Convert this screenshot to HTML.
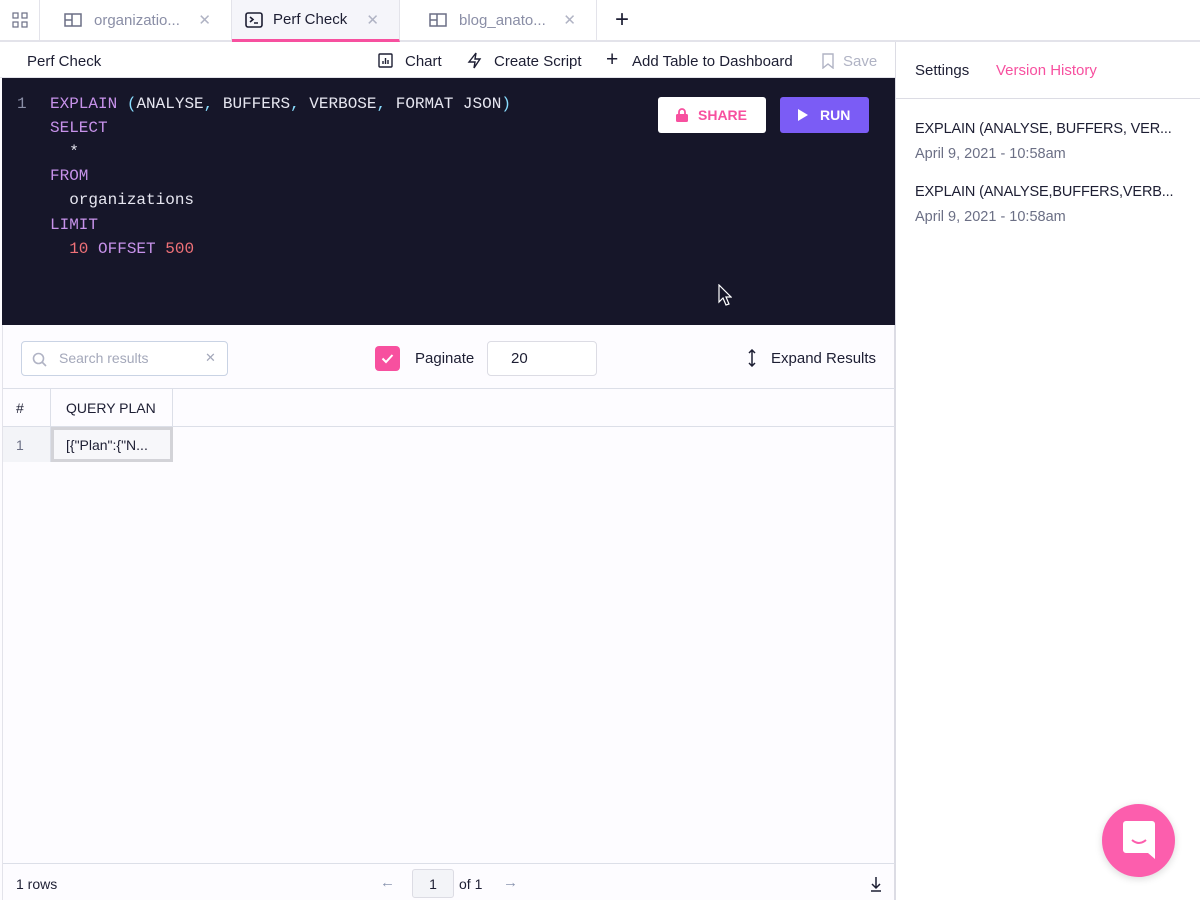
<!DOCTYPE html>
<html><head><meta charset="utf-8"><style>
*{box-sizing:border-box;margin:0;padding:0}
body{width:1200px;height:900px;overflow:hidden;background:#fdfcff;font-family:"Liberation Sans",sans-serif;color:#1d1e33;position:relative;font-size:15px}
.abs{position:absolute}
.tabs{left:0;top:0;width:1200px;height:42px;border-bottom:2px solid #e3e3ea;background:#fff}
.tab{position:absolute;top:0;height:40px;border-right:1px solid #e3e3ea;display:flex;align-items:center;font-size:15px;color:#8a8ea6}
.tab .x{position:absolute;right:20px;color:#b0b3c4;font-size:15px}
.tb{left:0;top:42px;width:895px;height:36px;background:#fff;border-bottom:1px solid #e3e3ea;font-size:15px}
.ed{left:2px;top:78px;width:893px;height:247px;background:#161629;font-family:"Liberation Mono",monospace;font-size:16px;color:#e6e6f0}
.ln{position:absolute;left:15px;color:#8a8ea6}
.cl{position:absolute;left:48px;white-space:pre}
.k{color:#c792ea}.p{color:#89ddff}.n{color:#f07178}
.rp{left:895px;top:42px;width:305px;height:858px;border-left:1px solid #dcdce4;background:#fff}
</style></head><body>
<div class="abs tabs">
 <div class="tab" style="left:0;width:40px;justify-content:center">
  <svg width="16" height="16" viewBox="0 0 16 16" fill="none" stroke="#6b6f85" stroke-width="1.2"><rect x="1" y="1" width="5" height="5"/><rect x="10" y="1" width="5" height="5"/><rect x="1" y="10" width="5" height="5"/><rect x="10" y="10" width="5" height="5"/></svg></div>
 <div class="tab" style="left:40px;width:192px;padding-left:24px">
  <svg width="18" height="14" viewBox="0 0 18 14" fill="none" stroke="#6b6f85" stroke-width="1.5"><rect x="1" y="1" width="16" height="12"/><line x1="8" y1="1" x2="8" y2="13"/><line x1="1" y1="7" x2="8" y2="7"/></svg>
  <span style="margin-left:12px">organizatio...</span><span class="x">✕</span></div>
 <div class="tab" style="left:232px;width:168px;padding-left:13px;background:#f5f5fa;color:#1d1e33;border-bottom:3px solid #f7509f;height:42px">
  <svg width="18" height="16" viewBox="0 0 18 16" fill="none" stroke="#1d1e33" stroke-width="1.6"><rect x="1" y="1" width="16" height="14" rx="2"/><path d="M5 5l3 2.5L5 10M9 11h4"/></svg>
  <span style="margin-left:10px">Perf Check</span><span class="x" style="color:#b0b3c4">✕</span></div>
 <div class="tab" style="left:400px;width:197px;padding-left:29px">
  <svg width="18" height="14" viewBox="0 0 18 14" fill="none" stroke="#6b6f85" stroke-width="1.5"><rect x="1" y="1" width="16" height="12"/><line x1="8" y1="1" x2="8" y2="13"/><line x1="1" y1="7" x2="8" y2="7"/></svg>
  <span style="margin-left:12px">blog_anato...</span><span class="x">✕</span></div>
 <div class="abs" style="left:615px;top:6px;font-size:24px;color:#1d1e33;font-weight:300">+</div>
</div>
<div class="abs tb">
 <span class="abs" style="left:27px;top:11px">Perf Check</span>
 <svg class="abs" style="left:378px;top:11px" width="15" height="15" viewBox="0 0 15 15" fill="none" stroke="#1d1e33" stroke-width="1.4"><rect x="1" y="1" width="13" height="13" rx="1"/><path d="M5 11V8M7.5 11V5M10 11V7"/></svg>
 <span class="abs" style="left:405px;top:11px">Chart</span>
 <svg class="abs" style="left:467px;top:10px" width="15" height="17" viewBox="0 0 15 17" fill="none" stroke="#1d1e33" stroke-width="1.4"><path d="M9 1L2 10h6l-1 6 6-9H8z"/></svg>
 <span class="abs" style="left:494px;top:11px">Create Script</span>
 <span class="abs" style="left:606px;top:6px;font-size:21px">+</span>
 <span class="abs" style="left:632px;top:11px">Add Table to Dashboard</span>
 <svg class="abs" style="left:822px;top:11px" width="12" height="16" viewBox="0 0 12 16" fill="none" stroke="#b0b3c4" stroke-width="1.4"><path d="M1 1h10v14l-5-4-5 4z"/></svg>
 <span class="abs" style="left:843px;top:11px;color:#b0b3c4">Save</span>
</div>
<div class="abs ed">
 <div class="ln" style="top:17px">1</div>
 <div class="cl" style="top:17px"><span class="k">EXPLAIN</span> <span class="p">(</span>ANALYSE<span class="p">,</span> BUFFERS<span class="p">,</span> VERBOSE<span class="p">,</span> FORMAT JSON<span class="p">)</span></div>
 <div class="cl k" style="top:41px">SELECT</div>
 <div class="cl" style="top:65px">  *</div>
 <div class="cl k" style="top:89px">FROM</div>
 <div class="cl" style="top:113px">  organizations</div>
 <div class="cl k" style="top:138px">LIMIT</div>
 <div class="cl" style="top:162px">  <span class="n">10</span> <span class="k">OFFSET</span> <span class="n">500</span></div>
 <div class="abs" style="left:656px;top:19px;width:108px;height:36px;background:#fff;border-radius:3px;font-family:'Liberation Sans',sans-serif;font-weight:bold;color:#f7509f;font-size:14px;display:flex;align-items:center;padding-left:18px">
  <svg width="12" height="14" viewBox="0 0 12 14"><path d="M3 6V4a3 3 0 016 0v2" fill="none" stroke="#f7509f" stroke-width="1.8"/><rect x="0" y="6" width="12" height="8" rx="1.5" fill="#f7509f"/></svg><span style="margin-left:10px">SHARE</span></div>
 <div class="abs" style="left:778px;top:19px;width:89px;height:36px;background:#7b5cf5;border-radius:3px;font-family:'Liberation Sans',sans-serif;font-weight:bold;color:#fff;font-size:14px;display:flex;align-items:center;padding-left:18px">
  <svg width="10" height="12" viewBox="0 0 10 12"><path d="M0 0l10 6-10 6z" fill="#fff"/></svg><span style="margin-left:12px">RUN</span></div>
 <svg class="abs" style="left:716px;top:206px" width="14" height="22" viewBox="0 0 14 22"><path d="M1 1v17l4-4 3 7 3-1-3-7h5z" fill="#161629" stroke="#fff" stroke-width="1.2"/></svg>
</div>
<div class="abs" style="left:2px;top:325px;width:893px;height:575px;border-right:1px solid #dcdce4;border-left:1px solid #e3e3ea;background:#fdfcff">
 <div class="abs" style="left:18px;top:16px;width:207px;height:35px;border:1px solid #c9d3e4;border-radius:4px;background:#fff">
  <svg class="abs" style="left:10px;top:10px" width="15" height="15" viewBox="0 0 15 15" fill="none" stroke="#b0b3c4" stroke-width="1.6"><circle cx="6.5" cy="6.5" r="5"/><path d="M10 10l4 4"/></svg>
  <span class="abs" style="left:37px;top:8px;color:#a4a8ba;font-size:14px">Search results</span>
  <span class="abs" style="left:183px;top:8px;color:#a4a8ba;font-size:13px">✕</span>
 </div>
 <div class="abs" style="left:372px;top:21px;width:25px;height:25px;background:#f7509f;border-radius:4px"><svg width="25" height="25" viewBox="0 0 25 25"><path d="M7.5 12.5l3.5 3.5 6.5-7" fill="none" stroke="#fff" stroke-width="2"/></svg></div>
 <span class="abs" style="left:412px;top:25px;font-size:15px">Paginate</span>
 <div class="abs" style="left:484px;top:16px;width:110px;height:35px;border:1px solid #dcdce4;border-radius:4px;background:#fff;padding:8px 0 0 23px;font-size:15px">20</div>
 <svg class="abs" style="left:744px;top:24px" width="10" height="18" viewBox="0 0 10 18" fill="none" stroke="#1d1e33" stroke-width="1.5"><path d="M5 1v16M2 4l3-3 3 3M2 14l3 3 3-3"/></svg>
 <span class="abs" style="left:768px;top:25px;font-size:15px">Expand Results</span>
 <div class="abs" style="left:0;top:63px;width:892px;height:1px;background:#dcdfe8"></div>
 <div class="abs" style="left:0;top:101px;width:892px;height:1px;background:#dcdfe8"></div>
 <div class="abs" style="left:47px;top:63px;width:1px;height:74px;background:#dcdfe8"></div>
 <div class="abs" style="left:169px;top:63px;width:1px;height:38px;background:#dcdfe8"></div>
 <div class="abs" style="left:0;top:102px;width:47px;height:35px;background:#f3f4f8"></div>
 <span class="abs" style="left:13px;top:75px;font-size:14px">#</span>
 <span class="abs" style="left:63px;top:75px;font-size:14px">QUERY PLAN</span>
 <span class="abs" style="left:13px;top:112px;font-size:14px;color:#6b6f85">1</span>
 <div class="abs" style="left:48px;top:102px;width:122px;height:35px;border:3px solid #d3d3d8;background:#f7f7fa;padding:7px 0 0 12px;font-size:14px">[{"Plan":{"N...</div>
 <div class="abs" style="left:0;top:538px;width:892px;height:1px;background:#dcdfe8"></div>
 <span class="abs" style="left:13px;top:551px;font-size:14px">1 rows</span>
 <span class="abs" style="left:377px;top:549px;color:#8a94b0;font-size:15px">←</span>
 <div class="abs" style="left:409px;top:544px;width:42px;height:29px;border:1px solid #dcdce4;border-radius:3px;background:#f3f4f8;text-align:center;padding-top:6px;font-size:14px">1</div>
 <span class="abs" style="left:456px;top:551px;font-size:14px">of 1</span>
 <span class="abs" style="left:500px;top:549px;color:#8a94b0;font-size:15px">→</span>
 <svg class="abs" style="left:867px;top:551px" width="12" height="16" viewBox="0 0 12 16" fill="none" stroke="#1d1e33" stroke-width="1.5"><path d="M6 1v11M2 8l4 4 4-4M1 15h10"/></svg>
</div>
<div class="abs rp">
 <span class="abs" style="left:19px;top:20px;font-size:15px">Settings</span>
 <span class="abs" style="left:100px;top:20px;font-size:15px;color:#f7509f">Version History</span>
 <div class="abs" style="left:0;top:56px;width:305px;height:1px;background:#dcdce4"></div>
 <span class="abs" style="left:19px;top:79px;font-size:14.5px;letter-spacing:-0.15px">EXPLAIN (ANALYSE, BUFFERS, VER...</span>
 <span class="abs" style="left:19px;top:104px;font-size:14.5px;color:#6b6f85">April 9, 2021 - 10:58am</span>
 <span class="abs" style="left:19px;top:142px;font-size:14.5px;letter-spacing:-0.15px">EXPLAIN (ANALYSE,BUFFERS,VERB...</span>
 <span class="abs" style="left:19px;top:167px;font-size:14.5px;color:#6b6f85">April 9, 2021 - 10:58am</span>
 <div class="abs" style="left:206px;top:762px;width:73px;height:73px;border-radius:50%;background:#fc5ead;box-shadow:0 2px 8px rgba(0,0,0,.15)">
  <svg class="abs" style="left:21px;top:17px" width="32" height="38" viewBox="0 0 32 38"><path d="M3 0h26a3 3 0 013 3v35l-7-6H3a3 3 0 01-3-3V3a3 3 0 013-3z" fill="#fff"/><path d="M9 19q7 6 14 0" fill="none" stroke="#fc5ead" stroke-width="2"/></svg>
 </div>
</div>
</body></html>
